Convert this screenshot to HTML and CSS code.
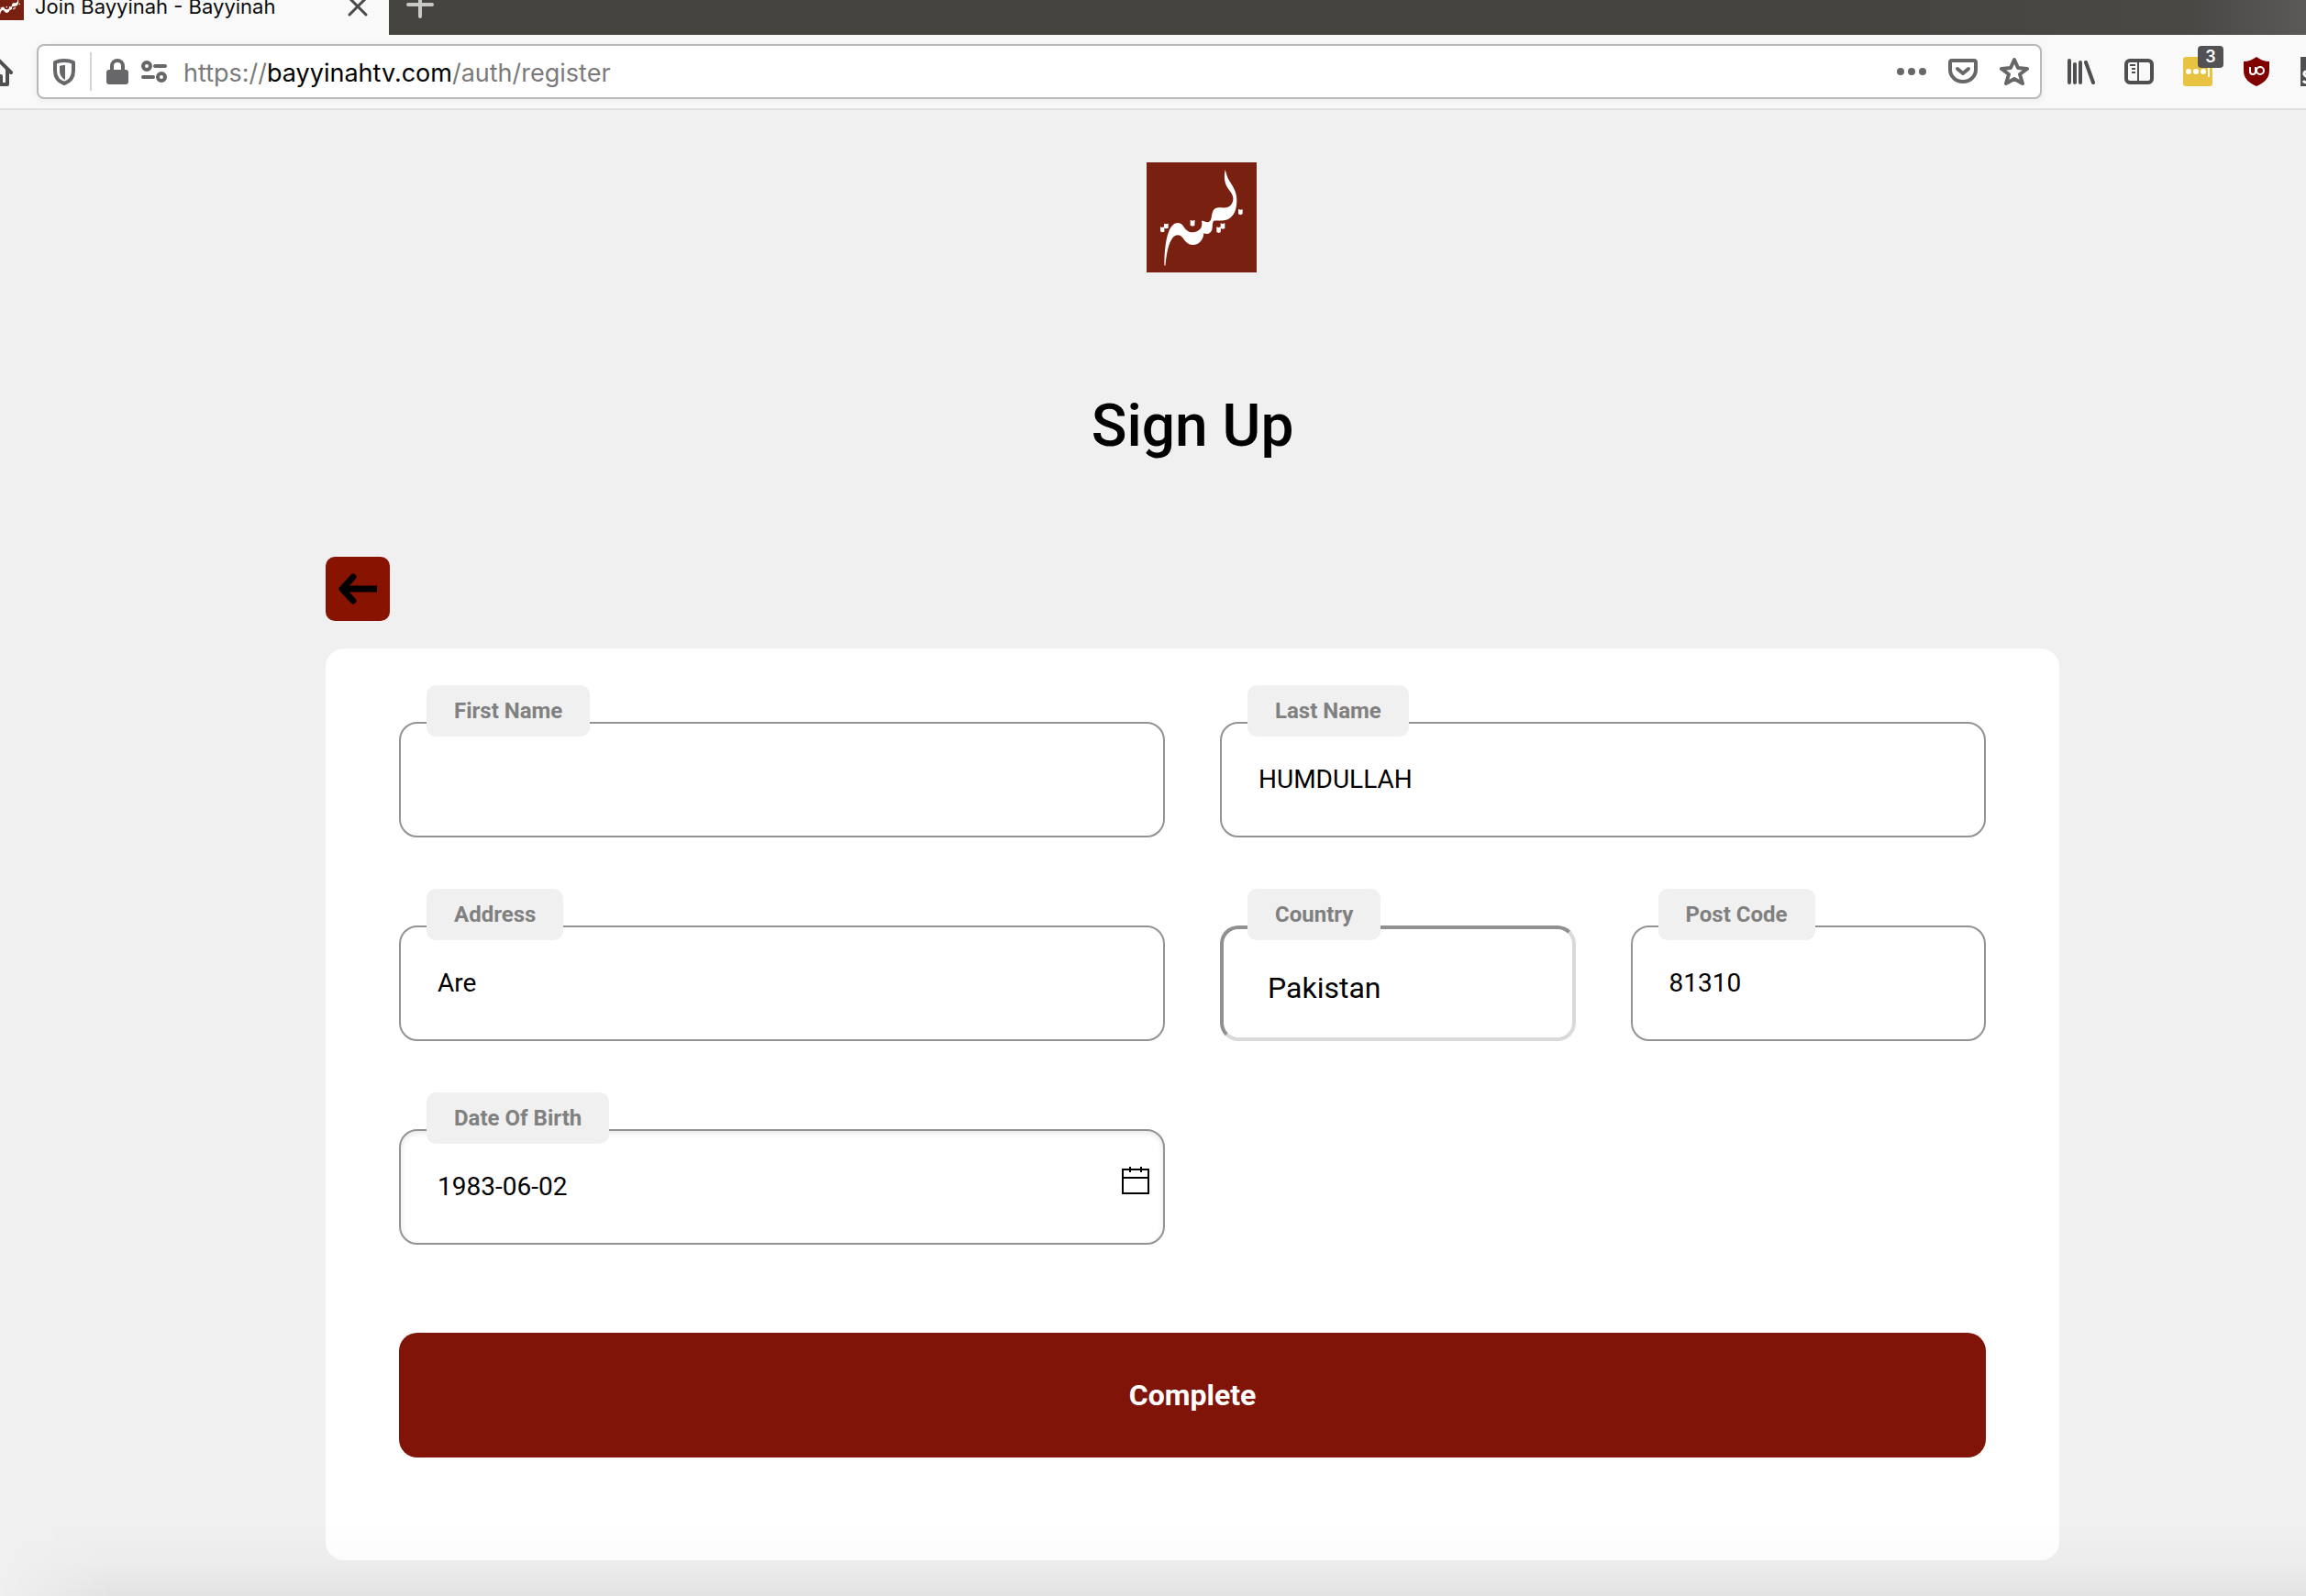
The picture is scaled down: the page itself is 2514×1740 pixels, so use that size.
FILE: index.html
```html
<!DOCTYPE html>
<html lang="en">
<head>
    <meta charset="UTF-8">
    <meta name="viewport" content="width=device-width, initial-scale=1.0">
    <title>Join Bayyinah - Bayyinah</title>
    <link rel="stylesheet" href="styles.css">
</head>
<body>
    <!-- Logo shape, used in the tab and on the page -->
    <svg class="defs" aria-hidden="true">
        <symbol id="logo" viewBox="60 51 360 360">
            <rect x="60" y="51" width="360" height="360" fill="#7a2010"/>
            <g fill="#fff">
                <path d="M317 74C321 88 323 98 331 112C344 132 355 150 355 174C355 205 347 226 327 237C312 244 290 240 280 242C274 248 277 262 273 274C268 284 260 288 247 283C246 303 233 321 211 321C193 320 186 308 177 296C168 286 155 286 146 297C130 317 126 350 121 389L118 388C118 345 122 305 132 279C140 258 150 249 163 249C176 250 180 260 187 269C197 281 213 283 226 276C238 270 243 262 240 242C250 241 253 249 263 246C274 241 271 226 276 213C281 200 291 198 305 199C321 201 332 198 339 186C347 171 343 158 332 144C319 128 313 112 315 90Z"/>
                <path d="M203 239L210 242L218 240L217 258L210 260L203 257Z"/>
                <path d="M117 251L124 253L131 251L131 266L124 268L118 266L118 278L111 280L105 277L105 262L111 264L117 262Z"/>
                <path d="M302 250L309 252L316 250L316 267L309 269L303 267L302 280L296 282L289 279L289 262L296 264L302 262Z"/>
                <path d="M360 204L367 206L374 205L374 220L367 223L360 220Z"/>
            </g>
        </symbol>
    </svg>

    <header class="browser">
        <div class="tabs">
            <div class="tab">
                <svg class="icon"><use href="#logo"/></svg>
                <span class="tab-title">Join Bayyinah - Bayyinah</span>
                <button class="icon-btn tab-close" aria-label="Close tab">
                    <svg class="icon" viewBox="0 0 32 32"><path d="M7 8L25 26M25 8L7 26" stroke="#4a4a4a" stroke-width="3" stroke-linecap="round"/></svg>
                </button>
            </div>
            <button class="icon-btn new-tab" aria-label="New tab">
                <svg class="icon" viewBox="0 0 32 32"><path d="M16 3V29M3 16H29" stroke="#c9c9c6" stroke-width="4" stroke-linecap="round"/></svg>
            </button>
        </div>

        <div class="toolbar">
            <button class="icon-btn home" aria-label="Home">
                <svg class="icon" viewBox="0 0 32 32"><path d="M2 17L16 3L30 17M6 14V30H13V21H19V30H26V14" fill="none" stroke="#4f4f51" stroke-width="4" stroke-linecap="round" stroke-linejoin="round"/></svg>
            </button>

            <div class="url-bar">
                <svg class="icon" viewBox="0 0 32 32">
                    <path d="M16 4C20 4 24 5 26 6V15C26 22 22 27 16 29C10 27 6 22 6 15V6C8 5 12 4 16 4Z" fill="none" stroke="#67676a" stroke-width="4" stroke-linejoin="round"/>
                    <path d="M17 9V25C13 23 11 19 11 15V10C13 9 15 9 17 9Z" fill="#67676a"/>
                </svg>
                <span class="url-line"></span>
                <svg class="icon" viewBox="0 0 32 32">
                    <rect x="4" y="14" width="24" height="16" rx="3" fill="#67676a"/>
                    <path d="M10 15V10A6 6 0 0 1 22 10V15" fill="none" stroke="#67676a" stroke-width="4"/>
                </svg>
                <svg class="icon" viewBox="0 0 32 32">
                    <g fill="none" stroke="#67676a" stroke-width="4">
                        <circle cx="8" cy="10" r="4"/>
                        <circle cx="24" cy="22" r="4"/>
                        <path d="M17 10H28M4 22H15" stroke-linecap="round"/>
                    </g>
                </svg>
                <div class="url" role="textbox" aria-label="Address" contenteditable="true" spellcheck="false">https://<span class="domain">bayyinahtv.com</span>/auth/register</div>
                <div class="url-actions">
                    <button class="icon-btn" aria-label="Page actions">
                        <svg class="icon" viewBox="0 0 32 32" fill="#67676a"><circle cx="4" cy="16" r="4"/><circle cx="16" cy="16" r="4"/><circle cx="28" cy="16" r="4"/></svg>
                    </button>
                    <button class="icon-btn" aria-label="Save to Pocket">
                        <svg class="icon" viewBox="0 0 32 32"><path d="M4 4H28Q30 4 30 6V14A14 13 0 0 1 2 14V6Q2 4 4 4ZM10 13L16 18L22 13" fill="none" stroke="#67676a" stroke-width="4" stroke-linecap="round" stroke-linejoin="round"/></svg>
                    </button>
                    <button class="icon-btn" aria-label="Bookmark this page">
                        <svg class="icon" viewBox="0 0 32 32"><path d="M16 3L20 12L30 13L22 19L25 29L16 24L7 29L10 19L2 13L12 12Z" fill="none" stroke="#67676a" stroke-width="4" stroke-linejoin="round"/></svg>
                    </button>
                </div>
            </div>

            <button class="icon-btn" aria-label="Library">
                <svg class="icon" viewBox="0 0 32 32"><path d="M4 4V28M10 8V28M16 6V28M22 6L30 28" fill="none" stroke="#4f4f51" stroke-width="4" stroke-linecap="round"/></svg>
            </button>
            <button class="icon-btn" aria-label="Sidebars">
                <svg class="icon" viewBox="0 0 32 32" fill="none" stroke="#4f4f51">
                    <rect x="2" y="4" width="28" height="24" rx="4" stroke-width="4"/>
                    <path d="M15 4V28M6 9H12M8 13H12M8 17H12" stroke-width="2"/>
                </svg>
            </button>
            <button class="icon-btn badge-btn" aria-label="Passwords">
                <svg class="icon" viewBox="0 0 32 32">
                    <rect width="32" height="32" rx="3" fill="#e8c341"/>
                    <g fill="#fff"><circle cx="6" cy="16" r="3"/><circle cx="14" cy="16" r="3"/><circle cx="22" cy="16" r="3"/><rect x="27" y="10" width="2" height="12"/></g>
                </svg>
                <span class="badge">3</span>
            </button>
            <button class="icon-btn" aria-label="uBlock Origin">
                <svg class="icon" viewBox="0 0 32 32">
                    <path d="M16 0C20 3 25 5 30 5V15C30 23 25 28 16 32C7 28 2 23 2 15V5C7 5 12 3 16 0Z" fill="#800000"/>
                    <path d="M9 11V16A3 3 0 0 0 15 16V11" fill="none" stroke="#fff" stroke-width="2"/>
                    <circle cx="20" cy="15" r="4" fill="none" stroke="#fff" stroke-width="2"/>
                    <path d="M15 11V16" stroke="#fff" stroke-width="2"/>
                </svg>
            </button>
            <button class="icon-btn last-btn" aria-label="Extension">
                <svg class="icon" viewBox="0 0 32 32">
                    <rect width="32" height="32" fill="#4f4f51"/>
                    <path d="M10 17C7 15 3 16 4 19C5 22 10 21 10 25C9 29 5 29 3 26" fill="none" stroke="#fff" stroke-width="3"/>
                </svg>
            </button>
        </div>
    </header>

    <main class="page">
        <svg class="logo" role="img" aria-label="Bayyinah"><use href="#logo"/></svg>
        <h1>Sign Up</h1>

        <button class="back" aria-label="Back">
            <svg class="back-icon" viewBox="0 0 42 42"><path d="M4 21H42" stroke="#000" stroke-width="7"/><path d="M16 8L4 21L16 34" fill="none" stroke="#000" stroke-width="7" stroke-linecap="round" stroke-linejoin="round"/></svg>
        </button>

        <form class="card">
            <div class="fields">
                <div class="field wide">
                    <label for="firstName">First Name</label>
                    <input type="text" id="firstName" name="firstName">
                </div>
                <div class="field wide">
                    <label for="lastName">Last Name</label>
                    <input type="text" id="lastName" name="lastName" value="HUMDULLAH">
                </div>
                <div class="field wide">
                    <label for="address">Address</label>
                    <input type="text" id="address" name="address" value="Are">
                </div>
                <div class="field">
                    <label for="country">Country</label>
                    <select id="country" name="country">
                        <option value="Pakistan">Pakistan</option>
                    </select>
                </div>
                <div class="field">
                    <label for="postCode">Post Code</label>
                    <input type="text" id="postCode" name="postCode" value="81310">
                </div>
                <div class="field wide">
                    <label for="dob">Date Of Birth</label>
                    <input type="text" id="dob" name="dob" class="date" value="1983-06-02">
                    <svg class="calendar" viewBox="0 0 30 30" fill="none" stroke="#000" stroke-width="2"><path d="M1 3H29V29H1ZM1 12H29M9 0V6M21 0V6"/></svg>
                </div>
            </div>
            <button type="submit" class="complete">Complete</button>
        </form>
    </main>
</body>
</html>
```

FILE: styles.css
```css
/* Global Reset */
* {
    margin: 0;
    padding: 0;
    box-sizing: border-box;
}

body {
    min-height: 100vh;
    font-family: Roboto, sans-serif;
    background-color: #f0f0f0;
    color: #000;
    overflow-x: hidden;
}

/* Soft shade along the bottom of the window */
body::after {
    content: "";
    position: fixed;
    left: 0;
    right: 0;
    bottom: 0;
    height: 80px;
    background: linear-gradient(to bottom, transparent, rgba(0, 0, 0, 0.01) 50%, rgba(0, 0, 0, 0.05));
    mask-image: linear-gradient(to right, transparent, #000 120px);
    pointer-events: none;
}

button {
    border: none;
    background: none;
    font-family: inherit;
    cursor: pointer;
}

.defs {
    position: absolute;
    width: 0;
    height: 0;
}

.icon {
    display: block;
    flex: none;
    width: 32px;
    height: 32px;
}

.icon-btn {
    flex: none;
}

/* Browser bars */
.browser {
    font-family: Inter, sans-serif;
    overflow: hidden;
}

.tabs {
    display: flex;
    align-items: flex-end;
    height: 38px;
    overflow: hidden;
    background: linear-gradient(to right, #45443f 80%, #4a4845 95%, #5b5957);
}

.tab {
    display: flex;
    align-items: center;
    flex: none;
    width: 430px;
    height: 64px;
    margin-left: -6px;
    padding-right: 18px;
    background-color: #f9f9f9;
}

.tab-title {
    flex: 1;
    margin-left: 12px;
    padding-top: 2px;
    font-size: 22px;
    white-space: nowrap;
    color: #0c0c0d;
}

.new-tab {
    margin-left: 18px;
    padding-bottom: 17px;
}

.toolbar {
    display: flex;
    align-items: center;
    gap: 32px;
    height: 82px;
    background-color: #f9f9f9;
    border-bottom: 2px solid #e0e0e0;
}

.home {
    margin-left: -18px;
    margin-right: -6px;
}

.url-bar {
    display: flex;
    align-items: center;
    flex: 1;
    height: 60px;
    margin-right: -6px;
    padding: 0 12px;
    background-color: #fff;
    border: 2px solid #b9b9b9;
    border-radius: 8px;
    box-shadow: 0 2px 8px rgba(0, 0, 0, 0.06);
    gap: 8px;
}

.url-line {
    width: 2px;
    height: 42px;
    margin: 0 4px;
    background-color: #d4d4d4;
}

.url {
    flex: 1;
    margin-left: 8px;
    padding-top: 2px;
    font-size: 27px;
    color: #7a7a7a;
    outline: none;
    white-space: nowrap;
}

.domain {
    color: #000;
}

.url-actions {
    display: flex;
    gap: 24px;
}

.badge-btn {
    position: relative;
}

.badge {
    position: absolute;
    top: -12px;
    left: 16px;
    width: 28px;
    height: 24px;
    border-radius: 4px;
    background-color: #525254;
    color: #fff;
    font-size: 18px;
    font-weight: 600;
    line-height: 24px;
    text-align: center;
}

.last-btn {
    margin-right: -26px;
}

/* Sign up page */
.page {
    display: flex;
    flex-direction: column;
    padding: 57px 269px 39px 355px;
}

.logo {
    align-self: center;
    width: 120px;
    height: 120px;
    margin-left: 20px;
}

h1 {
    margin-top: 130px;
    font-size: 64px;
    font-weight: 500;
    line-height: 76px;
    text-align: center;
}

.back {
    width: 70px;
    height: 70px;
    margin: 104px 0 30px;
    padding: 14px;
    border-radius: 10px;
    background-color: #871300;
}

.back-icon {
    display: block;
    width: 42px;
    height: 42px;
}

.card {
    padding: 40px 80px 112px;
    background-color: #fff;
    border-radius: 20px;
}

.fields {
    display: grid;
    grid-template-columns: repeat(4, 1fr);
    gap: 56px 60px;
}

.field {
    position: relative;
    display: flex;
    flex-direction: column;
    min-width: 0;
}

.wide {
    grid-column: span 2;
}

label {
    position: relative;
    z-index: 1; /* Sits over the field border */
    align-self: flex-start;
    margin-left: 30px;
    padding: 0 30px;
    border-radius: 10px;
    background-color: #f0f0f0;
    color: #808080;
    font-size: 24px;
    font-weight: 700;
    line-height: 56px;
}

input,
select {
    width: 100%;
    height: 126px;
    margin-top: -16px;
    padding: 0 40px 2px;
    border: 2px solid #939393;
    border-radius: 20px;
    background-color: #fff;
    color: #000;
    font-family: inherit;
    font-size: 28px;
    outline: none;
}

select {
    appearance: none;
    padding: 10px 48px 0;
    border-width: 4px;
    border-color: #909090 #dadada #dadada #909090;
    font-size: 32px;
}

.date {
    box-shadow: inset 0 2px 6px rgba(0, 0, 0, 0.1);
}

.calendar {
    position: absolute;
    top: 81px;
    right: 17px;
    width: 30px;
    height: 30px;
}

.complete {
    display: block;
    width: 100%;
    height: 136px;
    margin-top: 96px;
    border-radius: 20px;
    background-color: #801408;
    color: #fff;
    font-size: 32px;
    font-weight: 700;
}
```
